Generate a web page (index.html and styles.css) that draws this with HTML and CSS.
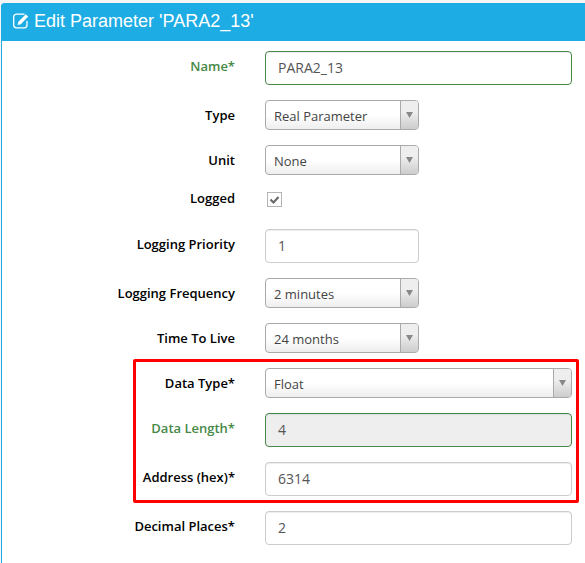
FILE: index.html
```html
<!DOCTYPE html>
<html lang="en">
<head>
<meta charset="utf-8">
<title>Edit Parameter</title>
<link rel="stylesheet" href="styles.css">
</head>
<body>
<section class="panel">
  <header class="panel-heading">
    <svg class="edit-icon" viewBox="0 0 16 16" aria-hidden="true"><path class="outline" d="M11.500 1.200H3.500A2.800 2.800 0 0 0 .7 4v8a2.800 2.800 0 0 0 2.800 2.800h7.700A2.800 2.800 0 0 0 14 12V8"/><path class="pencil" d="M12.800 1.200l2.400 2.200-7.400 7.800-3.300.8.900-3.200z"/></svg>
    <h1>Edit Parameter 'PARA2_13'</h1>
  </header>
  <form class="fields">
    <div class="row valid"><label>Name*</label><div class="input">PARA2_13</div></div>
    <div class="row"><label>Type</label><div class="select short"><span>Real Parameter</span><i class="arrow"></i></div></div>
    <div class="row"><label>Unit</label><div class="select short"><span>None</span><i class="arrow"></i></div></div>
    <div class="row check-row"><label>Logged</label><div class="checkbox"><svg viewBox="0 0 15 15" aria-hidden="true"><path d="M3.500 7.500l3 3L11.500 5"/></svg></div></div>
    <div class="row"><label>Logging Priority</label><div class="input short">1</div></div>
    <div class="row"><label>Logging Frequency</label><div class="select short"><span>2 minutes</span><i class="arrow"></i></div></div>
    <div class="row"><label>Time To Live</label><div class="select short"><span>24 months</span><i class="arrow"></i></div></div>
    <div class="group">
      <div class="row"><label>Data Type*</label><div class="select"><span>Float</span><i class="arrow"></i></div></div>
      <div class="row valid"><label>Data Length*</label><div class="input disabled">4</div></div>
      <div class="row"><label>Address (hex)*</label><div class="input">6314</div></div>
      <div class="highlight"></div>
    </div>
    <div class="row"><label>Decimal Places*</label><div class="input">2</div></div>
  </form>
</section>
</body>
</html>
```
FILE: styles.css
```css
* { box-sizing: border-box; }
body {
  margin: 0;
  padding: 3px 0 0 1px;
  height: 563px;
  background: #f5f5f5;
  font: 13px/18px "Open Sans", sans-serif;
  color: #000;
}
.panel {
  height: 560px;
  border-left: 1px solid #1dace3;
  border-radius: 4px 0 0 0;
  background: #fff;
}
.panel-heading {
  display: flex;
  align-items: center;
  height: 38px;
  margin-left: -1px;
  padding: 0 0 2px 12px;
  border-radius: 4px 0 0 0;
  background: #1dace3;
  color: #fff;
}
.edit-icon { width: 16px; height: 16px; margin-right: 5px; }
.edit-icon .outline { fill: none; stroke: #fff; stroke-width: 1.3; }
.edit-icon .pencil { fill: #fff; }
h1 { margin: 0; font: 18px/20px "Liberation Sans", Arial, sans-serif; }
.fields, .group { display: flex; flex-direction: column; gap: 15px; }
.fields { padding: 10px 13px 0 0; }
.group { position: relative; }
.row { display: grid; grid-template-columns: 233px 307px; column-gap: 30px; }
label { padding-top: 6px; text-align: right; font-weight: 600; }
.valid label { color: #468847; }
.input {
  height: 34px;
  padding: 7px 12px 0;
  border: 1px solid #ccc;
  border-radius: 4px;
  box-shadow: inset 0 1px 1px rgba(0,0,0,.075);
  font-size: 14px;
  color: #555;
}
.valid .input { border-color: #468847; }
.input.disabled { background: #eee; }
.short { width: 154px; }
.select {
  display: flex;
  justify-content: space-between;
  height: 30px;
  border: 1px solid #aaa;
  border-radius: 4px;
  overflow: hidden;
  background: linear-gradient(#fff 50%, #eee);
  color: #444;
}
.select span { padding: 6px 0 0 8px; }
.arrow {
  display: flex;
  justify-content: center;
  width: 18px;
  padding-top: 11px;
  border-left: 1px solid #aaa;
  background: linear-gradient(#eee 40%, #ccc);
}
.arrow::before {
  content: "";
  width: 7px;
  height: 6px;
  background: #888;
  clip-path: polygon(0 0, 100% 0, 50% 100%);
}
.check-row { height: 24px; }
.check-row label { padding-top: 0; margin-top: -1px; }
.checkbox {
  width: 15px;
  height: 15px;
  margin: 2px 0 0 2px;
  border: 1px solid #b4b4b4;
}
.checkbox svg { display: block; width: 15px; height: 15px; margin: -1px; fill: none; stroke: #666; stroke-width: 2; }
.highlight {
  position: absolute;
  top: -9px;
  bottom: -7px;
  left: 131px;
  width: 446px;
  border: 3px solid #f00;
  border-radius: 2px;
}
```
